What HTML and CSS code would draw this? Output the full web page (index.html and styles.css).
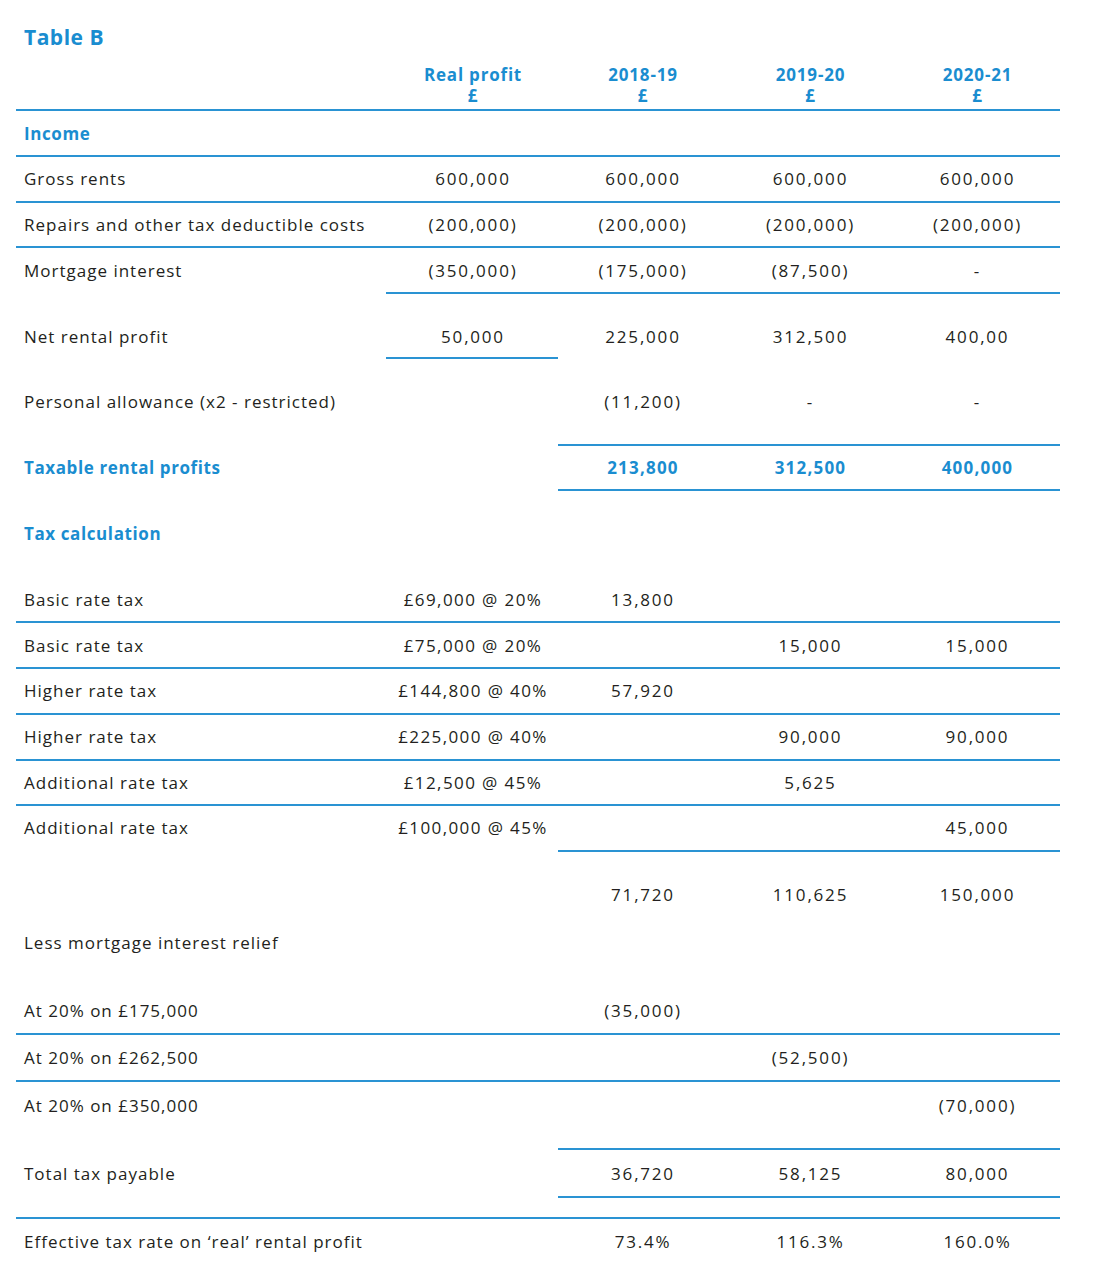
FILE: index.html
```html
<!DOCTYPE html>
<html lang="en">
<head>
<meta charset="utf-8">
<title>Table B</title>
<link rel="stylesheet" href="styles.css">
</head>
<body>
<div class="sheet">
  <h1 class="title">Table B</h1>
  <div class="table">
    <div class="row r-head head">
      <div class="b"></div>
      <div class="b">Real profit<br>£</div>
      <div class="b">2018-19<br>£</div>
      <div class="b">2019-20<br>£</div>
      <div class="b">2020-21<br>£</div>
    </div>
    <div class="row r-income">
      <div class="b lbl blue strong">Income</div>
      <div class="b"></div><div class="b"></div><div class="b"></div><div class="b"></div>
    </div>
    <div class="row r-46-11">
      <div class="b lbl">Gross rents</div>
      <div class="b">600,000</div><div class="b">600,000</div><div class="b">600,000</div><div class="b">600,000</div>
    </div>
    <div class="row r-45-11">
      <div class="b lbl">Repairs and other tax deductible costs</div>
      <div class="b">(200,000)</div><div class="b">(200,000)</div><div class="b">(200,000)</div><div class="b">(200,000)</div>
    </div>
    <div class="row r-46-12">
      <div class="lbl">Mortgage interest</div>
      <div class="b">(350,000)</div><div class="b">(175,000)</div><div class="b">(87,500)</div><div class="b">-</div>
    </div>
    <div class="row r-net">
      <div class="lbl">Net rental profit</div>
      <div class="b">50,000</div><div>225,000</div><div>312,500</div><div>400,00</div>
    </div>
    <div class="row r-pa">
      <div class="lbl">Personal allowance (x2 - restricted)</div>
      <div></div><div class="b">(11,200)</div><div class="b">-</div><div class="b">-</div>
    </div>
    <div class="row r-45-11 blue strong">
      <div class="lbl">Taxable rental profits</div>
      <div></div><div class="b">213,800</div><div class="b">312,500</div><div class="b">400,000</div>
    </div>
    <div class="row r-taxcalc">
      <div class="lbl blue strong">Tax calculation</div>
      <div></div><div></div><div></div><div></div>
    </div>
    <div class="row r-basic1">
      <div class="b lbl">Basic rate tax</div>
      <div class="b at">£69,000 @ 20%</div><div class="b">13,800</div><div class="b"></div><div class="b"></div>
    </div>
    <div class="row r-46-12">
      <div class="b lbl">Basic rate tax</div>
      <div class="b at">£75,000 @ 20%</div><div class="b"></div><div class="b">15,000</div><div class="b">15,000</div>
    </div>
    <div class="row r-46-11">
      <div class="b lbl">Higher rate tax</div>
      <div class="b at">£144,800 @ 40%</div><div class="b">57,920</div><div class="b"></div><div class="b"></div>
    </div>
    <div class="row r-46-11">
      <div class="b lbl">Higher rate tax</div>
      <div class="b at">£225,000 @ 40%</div><div class="b"></div><div class="b">90,000</div><div class="b">90,000</div>
    </div>
    <div class="row r-45-11">
      <div class="b lbl">Additional rate tax</div>
      <div class="b at">£12,500 @ 45%</div><div class="b"></div><div class="b">5,625</div><div class="b"></div>
    </div>
    <div class="row r-46-11">
      <div class="lbl">Additional rate tax</div>
      <div class="at">£100,000 @ 45%</div><div class="b"></div><div class="b"></div><div class="b">45,000</div>
    </div>
    <div class="row r-sub">
      <div class="lbl"></div>
      <div></div><div>71,720</div><div>110,625</div><div>150,000</div>
    </div>
    <div class="row r-less">
      <div class="lbl">Less mortgage interest relief</div>
      <div></div><div></div><div></div><div></div>
    </div>
    <div class="row r-at1">
      <div class="b lbl">At 20% on £175,000</div>
      <div class="b"></div><div class="b">(35,000)</div><div class="b"></div><div class="b"></div>
    </div>
    <div class="row r-at2">
      <div class="b lbl">At 20% on £262,500</div>
      <div class="b"></div><div class="b"></div><div class="b">(52,500)</div><div class="b"></div>
    </div>
    <div class="row r-at3">
      <div class="lbl">At 20% on £350,000</div>
      <div></div><div class="b"></div><div class="b"></div><div class="b">(70,000)</div>
    </div>
    <div class="row r-total">
      <div class="lbl">Total tax payable</div>
      <div></div><div class="b">36,720</div><div class="b">58,125</div><div class="b">80,000</div>
    </div>
    <div class="row r-eff">
      <div class="lbl">Effective tax rate on ‘real’ rental profit</div>
      <div></div><div>73.4%</div><div>116.3%</div><div>160.0%</div>
    </div>
  </div>
</div>
</body>
</html>
```

FILE: styles.css
```css
* { box-sizing: border-box; }
html, body { margin: 0; padding: 0; background: #ffffff; }
body {
  font-family: "Open Sans", "Noto Sans", "DejaVu Sans", sans-serif;
  font-size: 17px;
  color: #231f20;
  width: 1100px;
  height: 1272px;
  overflow: hidden;
}
.sheet { padding: 0 0 0 16px; }
.title {
  margin: 0;
  padding: 26px 0 0 8px;
  height: 48px;
  font-size: 21px;
  line-height: 22px;
  font-weight: 700;
  letter-spacing: 0.5px;
  color: #1a8dd0;
}
.table { width: 1044px; }
.row {
  display: grid;
  grid-template-columns: 370px 172px 168px 167px 167px;
}
.row > div {
  text-align: center;
  line-height: 22px;
  white-space: nowrap;
  letter-spacing: 1.8px;
  padding-left: 2px;
}
.row > .at { letter-spacing: 1.4px; }
.row > .lbl {
  text-align: left;
  padding-left: 8px;
  letter-spacing: 1px;
}
.row > .b { border-bottom: 2px solid #2a93d3; }
.blue { color: #1a8dd0; }
.strong { font-weight: 700; }
.row.strong > div { letter-spacing: 1.2px; }
.row.strong > .lbl { letter-spacing: 0.6px; }
.row > .lbl.strong { letter-spacing: 0.6px; }

.head > div {
  height: 63px;
  padding-top: 16px;
  line-height: 21px;
  font-weight: 700;
  color: #1a8dd0;
  letter-spacing: 0.8px;
}
.r-income > div { height: 46px; padding-top: 12px; }
.r-46-11 > div { height: 46px; padding-top: 11px; }
.r-45-11 > div { height: 45px; padding-top: 11px; }
.r-46-12 > div { height: 46px; padding-top: 12px; }
.r-net > div { height: 65px; padding-top: 32px; }
.r-pa > div { height: 87px; padding-top: 32px; }
.r-taxcalc > div { height: 69px; padding-top: 32px; }
.r-basic1 > div { height: 63px; padding-top: 29px; }
.r-sub > div { height: 60px; padding-top: 32px; }
.r-less > div { height: 50px; padding-top: 20px; }
.r-at1 > div { height: 73px; padding-top: 38px; }
.r-at2 > div { height: 47px; padding-top: 12px; }
.r-at3 > div { height: 68px; padding-top: 13px; }
.r-total > div { height: 48px; padding-top: 13px; }
.r-eff { margin-top: 19px; }
.r-eff > div {
  height: 48px;
  padding-top: 12px;
  border-top: 2px solid #2a93d3;
}
```
